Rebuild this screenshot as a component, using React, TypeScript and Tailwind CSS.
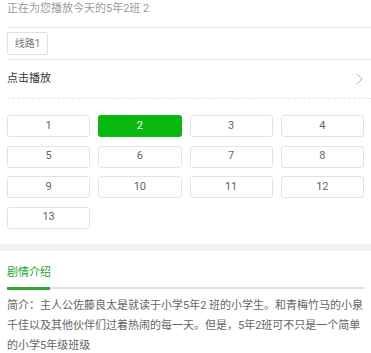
const EPISODES = Array.from({ length: 13 }, (_, i) => i + 1);
const CURRENT = 2;

export default function App() {
  return (
    <div className="h-[353px] w-[371px] overflow-hidden bg-white font-['Roboto','Noto_Sans_CJK_SC',sans-serif]">
      {/* now playing */}
      <div className="ml-[7px] h-[28px] border-b border-[#e6e6e6] text-[11px] leading-[18px] text-[#9a9a9a]">
        正在为您播放今天的5年2班 2
      </div>

      {/* source line */}
      <div className="ml-[7px] border-b border-[#e6e6e6] pb-[4px] pt-[4px]">
        <div className="flex h-[23px] w-[41px] items-center justify-center rounded-[2px] border border-[#e0e0e0] text-[10px] text-[#777]">
          线路1
        </div>
      </div>

      {/* play row */}
      <div className="ml-[7px] flex h-[39px] items-center justify-between border-b border-dashed border-[#e6e6e6] pr-[8px]">
        <span className="text-[11px] text-[#333]">点击播放</span>
        <svg width="7" height="12" viewBox="0 0 7 12" fill="none">
          <path d="M0.8 0.8 L6 6 L0.8 11.2" stroke="#b3b3b3" strokeWidth="1" />
        </svg>
      </div>

      {/* episodes */}
      <div className="grid grid-cols-4 gap-x-[8px] gap-y-[8.5px] px-[7px] pb-[15.5px] pt-[16px]">
        {EPISODES.map((n) =>
          n === CURRENT ? (
            <div
              key={n}
              className="flex h-[22px] items-center justify-center rounded-[3px] bg-[#09b80e] text-[11px] text-white"
            >
              {n}
            </div>
          ) : (
            <div
              key={n}
              className="flex h-[22px] items-center justify-center rounded-[3px] border border-[#e3e3e3] text-[11px] text-[#666]"
            >
              {n}
            </div>
          )
        )}
      </div>

      <div className="h-[7px] bg-[#f2f2f2]" />

      {/* synopsis */}
      <div className="px-[7px]">
        <div className="pb-[5px] pt-[13px] text-[11px] leading-[18px] text-[#22a629]">剧情介绍</div>
        <div className="relative mr-[-1px] h-[2px] bg-[#e3e3e3]">
          <div className="absolute left-0 top-0 h-[2.5px] w-[43px] bg-[#2eaa34]" />
        </div>
        <p className="pt-[7px] text-[11px] leading-[20px] text-[#666]">
          简介：主人公佐藤良太是就读于小学5年2 班的小学生。和青梅竹马的小泉千佳以及其他伙伴们过着热闹的每一天。但是，5年2班可不只是一个简单的小学5年级班级
        </p>
      </div>
    </div>
  );
}
